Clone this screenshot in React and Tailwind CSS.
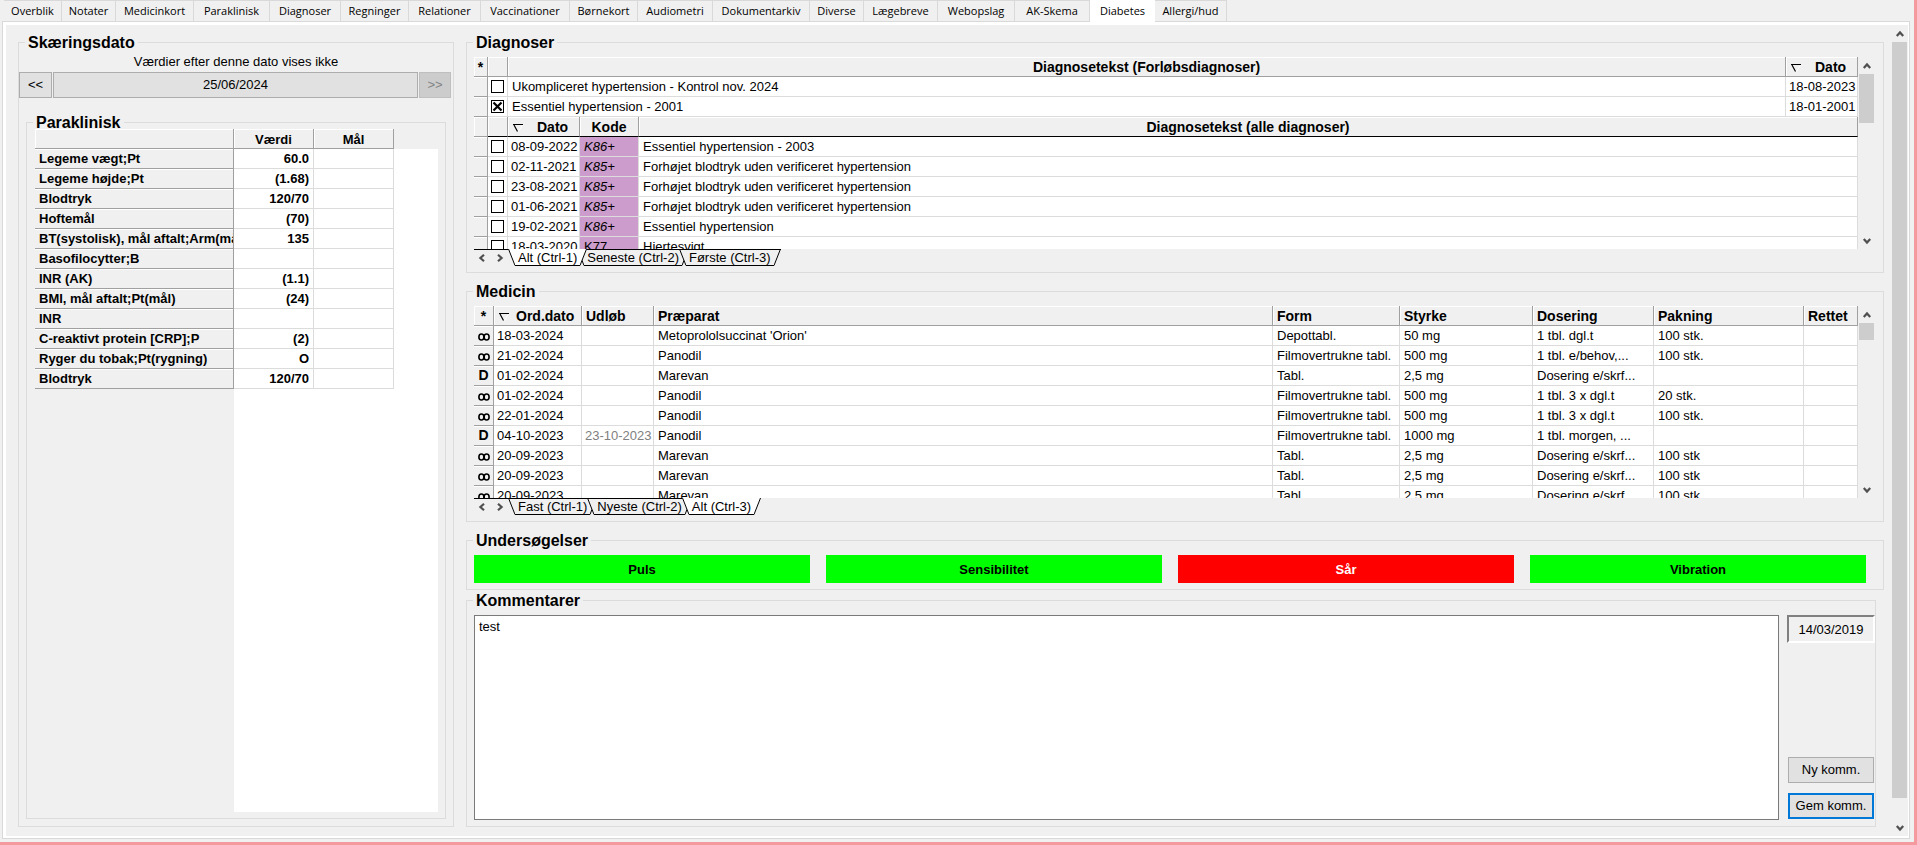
import React from "react";
import clsx from "clsx";

const pageTabs = [
  { label: "Overblik", width: "w-[58px]" },
  { label: "Notater", width: "w-[54px]" },
  { label: "Medicinkort", width: "w-[78px]" },
  { label: "Paraklinisk", width: "w-[76px]" },
  { label: "Diagnoser", width: "w-[71px]" },
  { label: "Regninger", width: "w-[68px]" },
  { label: "Relationer", width: "w-[72px]" },
  { label: "Vaccinationer", width: "w-[89px]" },
  { label: "Børnekort", width: "w-[68px]" },
  { label: "Audiometri", width: "w-[75px]" },
  { label: "Dokumentarkiv", width: "w-[97px]" },
  { label: "Diverse", width: "w-[54px]" },
  { label: "Lægebreve", width: "w-[74px]" },
  { label: "Webopslag", width: "w-[77px]" },
  { label: "AK-Skema", width: "w-[75px]" },
  { label: "Diabetes", width: "w-[65px]", active: true },
  { label: "Allergi/hud", width: "w-[72px]" },
];

const labValues = [
  ["Legeme vægt;Pt", "60.0"],
  ["Legeme højde;Pt", "(1.68)"],
  ["Blodtryk", "120/70"],
  ["Hoftemål", "(70)"],
  ["BT(systolisk), mål aftalt;Arm(mål)", "135"],
  ["Basofilocytter;B", ""],
  ["INR (AK)", "(1.1)"],
  ["BMI, mål aftalt;Pt(mål)", "(24)"],
  ["INR", ""],
  ["C-reaktivt protein [CRP];P", "(2)"],
  ["Ryger du tobak;Pt(rygning)", "O"],
  ["Blodtryk", "120/70"],
];

const courseDiagnoses = [
  { text: "Ukompliceret hypertension - Kontrol nov. 2024", date: "18-08-2023", checked: false },
  { text: "Essentiel hypertension - 2001", date: "18-01-2001", checked: true },
];

const allDiagnoses = [
  { date: "08-09-2022", code: "K86+", text: "Essentiel hypertension - 2003" },
  { date: "02-11-2021", code: "K85+", text: "Forhøjet blodtryk uden verificeret hypertension" },
  { date: "23-08-2021", code: "K85+", text: "Forhøjet blodtryk uden verificeret hypertension" },
  { date: "01-06-2021", code: "K85+", text: "Forhøjet blodtryk uden verificeret hypertension" },
  { date: "19-02-2021", code: "K86+", text: "Essentiel hypertension" },
  { date: "18-03-2020", code: "K77", text: "Hjertesvigt" },
];

const medicines = [
  ["oo", "18-03-2024", "", "Metoprololsuccinat 'Orion'", "Depottabl.", "50 mg", "1 tbl. dgl.t", "100 stk."],
  ["oo", "21-02-2024", "", "Panodil", "Filmovertrukne tabl.", "500 mg", "1 tbl. e/behov,...", "100 stk."],
  ["D", "01-02-2024", "", "Marevan", "Tabl.", "2,5 mg", "Dosering e/skrf...", ""],
  ["oo", "01-02-2024", "", "Panodil", "Filmovertrukne tabl.", "500 mg", "1 tbl. 3 x dgl.t", "20 stk."],
  ["oo", "22-01-2024", "", "Panodil", "Filmovertrukne tabl.", "500 mg", "1 tbl. 3 x dgl.t", "100 stk."],
  ["D", "04-10-2023", "23-10-2023", "Panodil", "Filmovertrukne tabl.", "1000 mg", "1 tbl. morgen, ...", ""],
  ["oo", "20-09-2023", "", "Marevan", "Tabl.", "2,5 mg", "Dosering e/skrf...", "100 stk"],
  ["oo", "20-09-2023", "", "Marevan", "Tabl.", "2,5 mg", "Dosering e/skrf...", "100 stk"],
  ["oo", "20-09-2023", "", "Marevan", "Tabl.", "2,5 mg", "Dosering e/skrf...", "100 stk"],
];

const examinations = [
  { label: "Puls", color: "bg-[#00ff00] text-black" },
  { label: "Sensibilitet", color: "bg-[#00ff00] text-black" },
  { label: "Sår", color: "bg-[#ff0000] text-white" },
  { label: "Vibration", color: "bg-[#00ff00] text-black" },
];

const tableClass = "w-full table-fixed border-separate border-spacing-0";

function Group({ title, className, children }) {
  return (
    <fieldset className={clsx("min-w-0 border border-[#dcdcdc]", className)}>
      <legend className="ml-[6px] px-[3px] pt-[2px] text-base leading-4 font-bold">{title}</legend>
      {children}
    </fieldset>
  );
}

function Chevron({ direction }) {
  const paths = {
    up: "M1.8 7 5 3.4 8.2 7",
    down: "M1.8 3 5 6.6 8.2 3",
    left: "M7 1.8 3.4 5 7 8.2",
    right: "M3 1.8 6.6 5 3 8.2",
  };
  return (
    <svg width="10" height="10" viewBox="0 0 10 10" fill="none" stroke="#505050" strokeWidth="2.2">
      <path d={paths[direction]} />
    </svg>
  );
}

function ScrollBar({ thumb }) {
  return (
    <div className="flex w-[17px] shrink-0 flex-col">
      <button type="button" aria-label="Rul op" className="flex h-[17px] items-center justify-center">
        <Chevron direction="up" />
      </button>
      <div className="flex flex-1 flex-col px-px">
        <div className={clsx("bg-[#cdcdcd]", thumb)} />
      </div>
      <button type="button" aria-label="Rul ned" className="flex h-[17px] items-center justify-center">
        <Chevron direction="down" />
      </button>
    </div>
  );
}

function SortMark() {
  return (
    <svg width="10" height="8" viewBox="0 0 10 8" fill="none" className="shrink-0">
      <path d="M9.5 1 5.5 7.5" stroke="#fff" />
      <path d="M0 .5H10M1 1 4.5 7.5" stroke="#000" strokeWidth="1.2" />
    </svg>
  );
}

function InfinityMark() {
  return (
    <svg width="12" height="8" viewBox="0 0 12 8" fill="none" stroke="#000" strokeWidth="1.6" className="mx-auto mt-[2px]">
      <ellipse cx="3.4" cy="4" rx="2.5" ry="3" />
      <ellipse cx="8.6" cy="4" rx="2.5" ry="3" />
      <path d="M6 1.6V6.4" />
    </svg>
  );
}

function HeadCell({ className, children }) {
  return (
    <th
      className={clsx(
        "h-5 overflow-hidden border-r border-b border-r-[#a0a0a0] bg-[#f0f0f0] p-0 pt-[2px] text-sm leading-[17px] font-bold whitespace-nowrap shadow-[inset_1px_1px_0_#fff]",
        className ?? "border-b-[#a0a0a0]"
      )}
    >
      {children}
    </th>
  );
}

function Cell({ className, children }) {
  return (
    <td
      className={clsx(
        "h-5 overflow-hidden border-r border-b border-[#dcdcdc] p-0 leading-[19px] whitespace-nowrap",
        className ?? "bg-white pl-1"
      )}
    >
      {children}
    </td>
  );
}

function StripCell({ children }) {
  return (
    <td className="h-5 overflow-hidden border-r border-b border-[#a0a0a0] bg-[#f0f0f0] p-0 text-center text-sm leading-[19px] font-bold shadow-[inset_0_1px_0_#fff]">
      {children}
    </td>
  );
}

function CheckCell({ label, checked }) {
  return (
    <td className="h-5 border-r border-b border-[#dcdcdc] bg-white p-0">
      <div className="relative ml-[3px] size-[13px]">
        <input
          type="checkbox"
          aria-label={label}
          defaultChecked={checked}
          className="peer block size-[13px] appearance-none border border-black bg-white"
        />
        <svg
          viewBox="0 0 13 13"
          className="pointer-events-none absolute inset-0 hidden size-[13px] peer-checked:block"
          stroke="#000"
          strokeWidth="2.2"
        >
          <path d="M2.5 2.5 10.5 10.5M10.5 2.5 2.5 10.5" />
        </svg>
      </div>
    </td>
  );
}

function SheetTab({ label, active }) {
  const fill = active ? "#ffffff" : "#f0f0f0";
  return (
    <button
      type="button"
      className={clsx("relative -ml-[10px] flex h-[17px] text-[13px] leading-4", active && "z-10")}
    >
      <svg width="7" height="17" viewBox="0 0 7 17" fill="none" stroke="#000">
        <path d="M0 0 7 17V0Z" fill={fill} stroke="none" />
        <path d="M.5 0 7 16.5" />
        {!active && <path d="M0 .5H7" />}
      </svg>
      <span
        className={clsx(
          "h-[17px] border-b border-black px-[3px]",
          active ? "bg-white pt-px" : "border-t bg-[#f0f0f0]"
        )}
      >
        {label}
      </span>
      <svg width="7" height="17" viewBox="0 0 7 17" fill="none" stroke="#000">
        <path d="M7 0 0 17V0Z" fill={fill} stroke="none" />
        <path d="M6.5 0 0 16.5" />
        {!active && <path d="M0 .5H7" />}
      </svg>
    </button>
  );
}

function SheetTabs({ tabs, active }) {
  return (
    <div className="flex h-[18px]">
      <div className="mr-[10px] flex h-[17px] w-[34px] items-center justify-between border-t border-black px-[3px]">
        <button type="button" aria-label="Forrige faneblad">
          <Chevron direction="left" />
        </button>
        <button type="button" aria-label="Næste faneblad">
          <Chevron direction="right" />
        </button>
      </div>
      {tabs.map((tab) => (
        <SheetTab key={tab} label={tab} active={tab === active} />
      ))}
    </div>
  );
}

function PageTabs() {
  return (
    <nav className="relative z-10 -mb-px flex h-[22px] pl-1 font-['Open_Sans',sans-serif] text-[11px]">
      {pageTabs.map((tab) => (
        <button
          key={tab.label}
          type="button"
          className={clsx(
            "h-[22px] shrink-0 text-center whitespace-nowrap",
            tab.width,
            tab.active ? "bg-white" : "border-t border-r border-b border-[#d9d9d9]"
          )}
        >
          {tab.label}
        </button>
      ))}
    </nav>
  );
}

function CutoffDate() {
  return (
    <Group title="Skæringsdato" className="flex w-[436px] shrink-0 flex-col">
      <div className="flex h-full flex-col">
        <p className="pt-[2px] text-center leading-[18px]">Værdier efter denne dato vises ikke</p>
        <div className="mt-px mr-[2px] flex h-[26px] gap-px">
          <button type="button" className="w-[33px] border border-[#adadad] bg-[#e1e1e1]">
            &lt;&lt;
          </button>
          <button type="button" className="flex-1 border border-[#adadad] bg-[#e1e1e1]">
            25/06/2024
          </button>
          <button type="button" disabled className="w-8 border border-[#bfbfbf] bg-[#cccccc] text-[#838383]">
            &gt;&gt;
          </button>
        </div>
        <LabPanel />
      </div>
    </Group>
  );
}

function LabPanel() {
  return (
    <Group title="Paraklinisk" className="mx-[7px] mt-[15px] mb-[7px] flex flex-1 flex-col">
      <div className="-mt-[2px] mr-[7px] mb-[6px] ml-2 flex h-full flex-col">
        <table className={tableClass}>
          <colgroup>
            <col className="w-[199px]" />
            <col className="w-[80px]" />
            <col className="w-[80px]" />
            <col />
          </colgroup>
          <thead className="text-[13px]">
            <tr>
              <LabHead />
              <LabHead>Værdi</LabHead>
              <LabHead>Mål</LabHead>
              <td className="p-0" />
            </tr>
          </thead>
          <tbody className="font-bold">
            {labValues.map(([name, value], i) => (
              <tr key={i}>
                <Cell className="border-[#a0a0a0]! bg-[#f0f0f0] pl-1 shadow-[inset_0_1px_0_#fff]">{name}</Cell>
                <Cell className="bg-white pr-1 text-right">{value}</Cell>
                <Cell />
                <td className="bg-white p-0" />
              </tr>
            ))}
          </tbody>
        </table>
        <div className="flex flex-1">
          <div className="w-[199px]" />
          <div className="flex-1 bg-white" />
        </div>
      </div>
    </Group>
  );
}

function LabHead({ children }) {
  return (
    <th className="h-5 border-r border-b border-[#a0a0a0] p-0 pt-[2px] leading-[17px] font-bold shadow-[inset_1px_1px_0_#fff]">
      {children}
    </th>
  );
}

function Diagnoses() {
  return (
    <Group title="Diagnoser">
      <div className="pt-[6px] pr-2 pb-[5px] pl-[7px]">
        <div className="flex h-[192px]">
          <div className="min-w-0 flex-1 overflow-hidden bg-white">
            <table className={tableClass}>
              <colgroup>
                <col className="w-[14px]" />
                <col className="w-[20px]" />
                <col />
                <col className="w-[72px]" />
              </colgroup>
              <thead>
                <tr>
                  <HeadCell>*</HeadCell>
                  <HeadCell />
                  <HeadCell>Diagnosetekst (Forløbsdiagnoser)</HeadCell>
                  <HeadCell>
                    <div className="flex items-center gap-[14px] pl-[5px]">
                      <SortMark />
                      Dato
                    </div>
                  </HeadCell>
                </tr>
              </thead>
              <tbody>
                {courseDiagnoses.map((row) => (
                  <tr key={row.date}>
                    <StripCell />
                    <CheckCell label={row.text} checked={row.checked} />
                    <Cell>{row.text}</Cell>
                    <Cell className="bg-white pl-[3px]">{row.date}</Cell>
                  </tr>
                ))}
              </tbody>
            </table>
            <table className={tableClass}>
              <colgroup>
                <col className="w-[14px]" />
                <col className="w-[20px]" />
                <col className="w-[72px]" />
                <col className="w-[59px]" />
                <col />
              </colgroup>
              <thead>
                <tr>
                  <HeadCell />
                  <HeadCell className="border-b-black" />
                  <HeadCell className="border-b-black">
                    <div className="flex items-center gap-[14px] pl-[5px]">
                      <SortMark />
                      Dato
                    </div>
                  </HeadCell>
                  <HeadCell className="border-b-black">Kode</HeadCell>
                  <HeadCell className="border-b-black">Diagnosetekst (alle diagnoser)</HeadCell>
                </tr>
              </thead>
              <tbody>
                {allDiagnoses.map((row) => (
                  <tr key={row.date}>
                    <StripCell />
                    <CheckCell label={row.text} />
                    <Cell className="bg-white pl-[3px]">{row.date}</Cell>
                    <Cell className={clsx("bg-[#cc9dcc] pl-1", row.code.endsWith("+") && "italic")}>{row.code}</Cell>
                    <Cell>{row.text}</Cell>
                  </tr>
                ))}
              </tbody>
            </table>
          </div>
          <ScrollBar thumb="h-[49px]" />
        </div>
        <SheetTabs tabs={["Alt (Ctrl-1)", "Seneste (Ctrl-2)", "Første (Ctrl-3)"]} active="Alt (Ctrl-1)" />
      </div>
    </Group>
  );
}

function Medicine() {
  return (
    <Group title="Medicin" className="mt-[9px]">
      <div className="pt-[6px] pr-2 pb-[5px] pl-[7px]">
        <div className="flex h-[192px]">
          <div className="min-w-0 flex-1 overflow-hidden bg-white">
            <table className={tableClass}>
              <colgroup>
                <col className="w-[20px]" />
                <col className="w-[88px]" />
                <col className="w-[72px]" />
                <col />
                <col className="w-[127px]" />
                <col className="w-[133px]" />
                <col className="w-[121px]" />
                <col className="w-[150px]" />
                <col className="w-[54px]" />
              </colgroup>
              <thead>
                <tr>
                  <HeadCell>*</HeadCell>
                  <HeadCell>
                    <div className="flex items-center gap-[7px] pl-[5px]">
                      <SortMark />
                      Ord.dato
                    </div>
                  </HeadCell>
                  {["Udløb", "Præparat", "Form", "Styrke", "Dosering", "Pakning", "Rettet"].map((head) => (
                    <HeadCell key={head} className="border-b-[#a0a0a0] pl-1 text-left">
                      {head}
                    </HeadCell>
                  ))}
                </tr>
              </thead>
              <tbody>
                {medicines.map(([kind, date, expiry, ...rest], i) => (
                  <tr key={i}>
                    <StripCell>{kind === "oo" ? <InfinityMark /> : kind}</StripCell>
                    <Cell className="bg-white pl-[3px]">{date}</Cell>
                    <Cell className="bg-white pl-[3px] text-[#808080]">{expiry}</Cell>
                    {rest.map((value, j) => (
                      <Cell key={j}>{value}</Cell>
                    ))}
                    <Cell />
                  </tr>
                ))}
              </tbody>
            </table>
          </div>
          <ScrollBar thumb="h-[17px]" />
        </div>
        <SheetTabs tabs={["Fast (Ctrl-1)", "Nyeste (Ctrl-2)", "Alt (Ctrl-3)"]} active="Alt (Ctrl-3)" />
      </div>
    </Group>
  );
}

function Examinations() {
  return (
    <Group title="Undersøgelser" className="mt-[9px]">
      <div className="grid grid-cols-4 gap-4 pt-[6px] pr-[17px] pb-[6px] pl-[7px]">
        {examinations.map((item) => (
          <button key={item.label} type="button" className={clsx("h-7 pt-px font-bold", item.color)}>
            {item.label}
          </button>
        ))}
      </div>
    </Group>
  );
}

function Comments() {
  return (
    <Group title="Kommentarer" className="mt-px mr-2 flex flex-1 flex-col">
      <div className="flex h-full gap-2 pt-[6px] pb-[6px] pl-[7px]">
        <textarea
          aria-label="Kommentarer"
          defaultValue="test"
          className="min-h-[120px] flex-1 resize-none border border-[#7a7a7a] bg-white px-1 py-[3px] leading-4 outline-none"
        />
        <div className="flex w-[88px] flex-col pb-px">
          <input
            aria-label="Dato for kommentar"
            readOnly
            defaultValue="14/03/2019"
            className="h-7 w-full border-2 border-t-[#808080] border-r-white border-b-white border-l-[#808080] bg-[#f0f0f0] text-center outline-none"
          />
          <button type="button" className="mx-px mt-auto h-[26px] border border-[#adadad] bg-[#e1e1e1]">
            Ny komm.
          </button>
          <button type="button" className="mx-px mt-[10px] h-[26px] border-2 border-[#0078d7] bg-[#e1e1e1]">
            Gem komm.
          </button>
        </div>
      </div>
    </Group>
  );
}

export default function App() {
  return (
    <div className="flex min-h-screen flex-col border-r-3 border-b-3 border-[#f49a9e] bg-[#f0f0f0] font-['Liberation_Sans',Arial,sans-serif] text-[13px] text-black">
      <PageTabs />
      <div className="mr-1 mb-[3px] ml-[2px] flex flex-1 border border-[#d9d9d9] bg-white pt-[3px] pr-px pb-[2px] pl-[3px]">
        <main className="flex min-w-0 flex-1 gap-3 bg-[#f0f0f0] pt-2 pr-[7px] pb-[9px] pl-3">
          <CutoffDate />
          <div className="flex min-w-0 flex-1 flex-col">
            <Diagnoses />
            <Medicine />
            <Examinations />
            <Comments />
          </div>
        </main>
        <div className="flex bg-[#f0f0f0]">
          <ScrollBar thumb="mb-[21px] flex-1" />
        </div>
      </div>
    </div>
  );
}
